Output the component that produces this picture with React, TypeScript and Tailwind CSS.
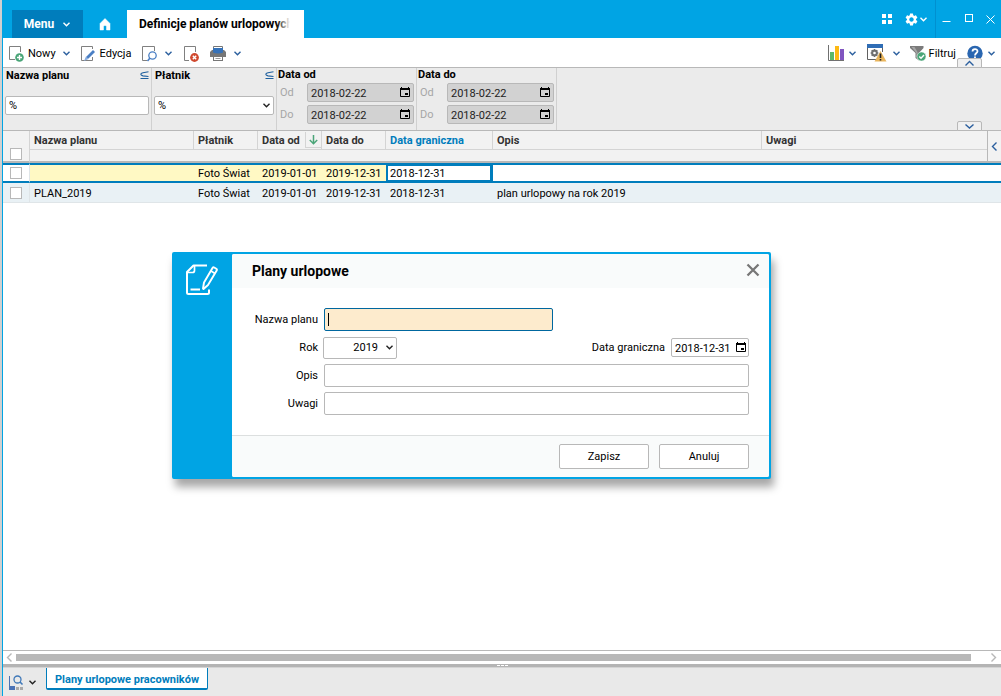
import type { ReactNode } from 'react'
import { MdSettings } from 'react-icons/md'

interface Plan {
  name: string
  payer: string
  from: string
  to: string
  deadline: string
  description: string
  notes: string
}

const plans: Plan[] = [
  { name: '', payer: 'Foto Świat', from: '2019-01-01', to: '2019-12-31', deadline: '2018-12-31', description: '', notes: '' },
  { name: 'PLAN_2019', payer: 'Foto Świat', from: '2019-01-01', to: '2019-12-31', deadline: '2018-12-31', description: 'plan urlopowy na rok 2019', notes: '' },
]

function Chevron({ className = 'text-[#2b5f9e]', dir = 'down' }: { className?: string; dir?: 'down' | 'up' | 'left' | 'right' }) {
  const points = {
    down: '1.5,2.8 4.5,5.8 7.5,2.8',
    up: '0.5,6.5 4.5,2.5 8.5,6.5',
    left: '6.5,0.5 2.5,4.5 6.5,8.5',
    right: '2.5,0.5 6.5,4.5 2.5,8.5',
  }
  return (
    <svg width="9" height="9" viewBox="0 0 9 9" className={`shrink-0 ${className}`} fill="none" stroke="currentColor" strokeWidth="1.4">
      <polyline points={points[dir]} />
    </svg>
  )
}

function HomeIcon() {
  return (
    <svg width="12" height="13" viewBox="0 0 12 13" fill="currentColor">
      <path d="M6 0.500L11 5.500V12H7.500V8.500Q7.500 7.500 6 7.500Q4.500 7.500 4.500 8.500V12H1V5.500Z" stroke="currentColor" strokeWidth="0.500" strokeLinejoin="round" />
    </svg>
  )
}

function NewIcon() {
  return (
    <svg width="16" height="17" viewBox="0 0 16 17">
      <path d="M11.500 7V1.500H0.500V14.500H6" fill="none" stroke="#808080" />
      <circle cx="10.500" cy="12.500" r="4.300" fill="#4aa578" />
      <path d="M10.500 10V15M8 12.500H13" stroke="#fff" strokeWidth="1.400" />
    </svg>
  )
}

function EditIcon() {
  return (
    <svg width="16" height="17" viewBox="0 0 16 17">
      <path d="M11.500 4V1.500H0.500V15.500H11.500V12" fill="none" stroke="#808080" />
      <path d="M4.500 14L5.500 11.500L12 5L14 7L7.500 13.500Z" fill="#4a7fc4" />
      <path d="M3 16L5 11.500L7.500 14Z" fill="#8aaee0" />
    </svg>
  )
}

function PreviewIcon() {
  return (
    <svg width="16" height="17" viewBox="0 0 16 17">
      <path d="M12.500 6V1.500H0.500V15.500H5" fill="none" stroke="#808080" />
      <circle cx="10.500" cy="10.500" r="3.700" fill="#fff" stroke="#4a7fc4" strokeWidth="1.300" />
      <path d="M8 13L5.500 16" stroke="#4a7fc4" strokeWidth="1.600" />
    </svg>
  )
}

function DeleteIcon() {
  return (
    <svg width="16" height="17" viewBox="0 0 16 17">
      <path d="M11.500 7V1.500H0.500V15.500H5" fill="none" stroke="#808080" />
      <circle cx="10.500" cy="12.500" r="4.400" fill="#d0492f" />
      <path d="M8.800 10.800L12.200 14.200M12.200 10.800L8.800 14.200" stroke="#fff" strokeWidth="1.400" />
    </svg>
  )
}

function PrinterIcon() {
  return (
    <svg width="16" height="17" viewBox="0 0 16 17">
      <path d="M3.500 5V1.500H12.500V5" fill="#fff" stroke="#777" />
      <path d="M2 5H14L16 7V12H0V7Z" fill="#777" />
      <path d="M3 3H13V7.500Q8 9.500 3 7.500Z" fill="#3672b9" />
      <rect x="3.500" y="11.500" width="9" height="4" fill="#fff" stroke="#777" />
      <path d="M5.500 13.500H10.500" stroke="#999" />
    </svg>
  )
}

function ChartIcon() {
  return (
    <svg width="16" height="17" viewBox="0 0 16 17">
      <path d="M0.500 0V15.500H16" fill="none" stroke="#707070" />
      <rect x="2" y="7" width="4" height="8" fill="#5cb86a" />
      <rect x="7" y="1" width="4" height="14" fill="#fdb913" />
      <rect x="12" y="4" width="4" height="11" fill="#8055c0" />
    </svg>
  )
}

function WarningWindowIcon() {
  return (
    <svg width="20" height="18" viewBox="0 0 20 18">
      <path d="M0.500 1V15.500H9M15.500 1V8" fill="none" stroke="#606060" />
      <rect width="16" height="4" fill="#2f6db5" />
      <circle cx="7.500" cy="9" r="2.500" fill="none" stroke="#707070" strokeWidth="1.800" />
      <path d="M7.500 5V13M3.500 9H11.500M4.700 6.200L10.300 11.800M10.300 6.200L4.700 11.800" stroke="#707070" strokeWidth="1.200" />
      <circle cx="7.500" cy="9" r="1.300" fill="#fff" />
      <path d="M13.500 7L19.500 17.500H7.500Z" fill="#e9b55c" />
      <path d="M13.500 9.500V14M13.500 15V16.500" stroke="#222" strokeWidth="1.600" />
    </svg>
  )
}

function FilterIcon() {
  return (
    <svg width="16" height="17" viewBox="0 0 16 17">
      <path d="M0 1H13.500V3L9 8V15.500L5.500 13V8L0 3Z" fill="#7b7b7b" />
      <path d="M1.500 2H4.500L7.500 7V13L6.500 12V8Z" fill="#a6a6a6" />
      <circle cx="11.500" cy="11.500" r="4.500" fill="#4aa578" stroke="#fff" strokeWidth="0.500" />
      <path d="M9.300 11.500L11 13.200L14 10" fill="none" stroke="#fff" strokeWidth="1.400" />
    </svg>
  )
}

function HelpIcon() {
  return (
    <svg width="16" height="17" viewBox="0 0 16 17">
      <circle cx="8" cy="8.500" r="7.700" fill="#2a66b0" />
      <path d="M5.500 6.500C5.500 3.300 10.500 3.300 10.500 6.300C10.500 8 8 8 8 10.500M8 11.500V13.300" fill="none" stroke="#fff" strokeWidth="1.800" />
    </svg>
  )
}

function SubsetIcon() {
  return (
    <svg width="9" height="9" viewBox="0 0 9 9" fill="none" stroke="#1d5f9e" strokeWidth="1.100">
      <path d="M8.500 0.800L3 1.800Q0.800 2.400 0.800 3.300Q0.800 4.300 3 4.900L8.500 5.500M0.500 7.500H8.500" />
    </svg>
  )
}

function CalendarIcon() {
  return (
    <svg width="10" height="11" viewBox="0 0 10 11" className="text-black">
      <path d="M0.500 2V9.500H9.500V2" fill="none" stroke="currentColor" />
      <path d="M0 1H10V3H0ZM1 0H2V1H1ZM8 0H9V1H8ZM5 6H8V8H5Z" fill="currentColor" />
    </svg>
  )
}

function DialogIcon() {
  return (
    <svg width="33" height="32" viewBox="0 0 33 32" fill="none" stroke="#fff" strokeWidth="2" strokeLinejoin="round">
      <path d="M22 1.500H8.500L2 8V28.500Q2 30 3.500 30H22.500Q24 30 24 28.500V25.500" />
      <path d="M9.500 2V6.500Q9.500 8.500 7.500 8.500H2.500" strokeWidth="1.700" />
      <path d="M18 24.500L19 18.500L27.500 4Q28.200 3 29.200 3.500L31.300 4.800Q32.300 5.500 31.700 6.500L23 21L18.500 25Z" strokeWidth="1.900" />
      <path d="M26 7L30 9.500" strokeWidth="1.500" />
      <path d="M5.500 25.500H15" />
    </svg>
  )
}

function ToolButton({ label, children }: { label: string; children: ReactNode }) {
  return (
    <button type="button" aria-label={label} className="flex h-5 items-center gap-[3px]">
      {children}
    </button>
  )
}

interface DateFieldProps {
  id: string
  value: string
  disabled?: boolean
}

function DateField({ id, value, disabled }: DateFieldProps) {
  return (
    <div
      className={`flex h-[19px] items-center rounded-[2px] border border-[#b8b8b8] pl-[3px] ${
        disabled ? 'w-[107px] bg-[#d2d2d2] pr-[3px] text-[#222]' : 'w-[78px] bg-white pr-[2px]'
      }`}
    >
      <input id={id} defaultValue={value} readOnly={disabled} className="min-w-0 flex-1 pt-px outline-none" />
      <button type="button" aria-label="Kalendarz" className="shrink-0">
        <CalendarIcon />
      </button>
    </div>
  )
}

function DateRange({ id, title }: { id: string; title: string }) {
  return (
    <fieldset className="w-[140px] border-r border-[#d0d0d0] pl-px">
      <legend className="float-left h-[15px] w-full leading-[13px] font-bold">{title}</legend>
      <div className="flex flex-col gap-[3px] pr-[2px]">
        {['Od', 'Do'].map((part) => (
          <div key={part} className="flex items-center justify-between pl-[2px]">
            <label htmlFor={`${id}-${part}`} className="text-[#a6a6a6]">{part}</label>
            <DateField id={`${id}-${part}`} value="2018-02-22" disabled />
          </div>
        ))}
      </div>
    </fieldset>
  )
}

function TitleBar() {
  return (
    <header className="flex h-[38px] items-end bg-[#00a4e4] pl-[9px] text-white">
      <button type="button" className="flex h-7 w-[71px] items-center justify-center gap-2 bg-[#007dbc] text-xs font-bold">
        Menu
        <Chevron className="text-white" />
      </button>
      <button type="button" aria-label="Start" className="flex h-7 w-11 items-center justify-center">
        <HomeIcon />
      </button>
      <div className="relative h-7 w-[177px] bg-white pl-3 text-xs leading-7 font-bold whitespace-nowrap text-black">
        Definicje planów urlopowych
        <div className="absolute top-0 right-0 flex h-7 w-7">
          <div className="w-[14px] bg-linear-to-r from-white/0 to-white" />
          <div className="flex-1 bg-white" />
        </div>
      </div>
      <div className="ml-auto flex h-full items-center">
        <button type="button" aria-label="Moduły">
          <svg width="10" height="10" viewBox="0 0 10 10" fill="currentColor">
            <path d="M0 0H4V4H0ZM6 0H10V4H6ZM0 6H4V10H0ZM6 6H10V10H6Z" />
          </svg>
        </button>
        <button type="button" aria-label="Ustawienia" className="ml-3 flex items-center">
          <MdSettings className="size-[15px]" />
          <Chevron className="text-white" />
        </button>
        <div className="ml-[7px] h-full w-px bg-[#0090d0]" />
        <button type="button" aria-label="Minimalizuj" className="ml-[6px]">
          <svg width="9" height="9" viewBox="0 0 9 9" stroke="currentColor"><path d="M0.500 6.500H8.500" /></svg>
        </button>
        <button type="button" aria-label="Maksymalizuj" className="ml-[14px]">
          <svg width="9" height="11" viewBox="0 0 9 11" stroke="currentColor" fill="none"><rect x="0.500" y="0.500" width="7" height="7" /></svg>
        </button>
        <button type="button" aria-label="Zamknij" className="mr-[6px] ml-3">
          <svg width="9" height="11" viewBox="0 0 9 11" stroke="currentColor"><path d="M0.500 1.500L8.500 9.500M8.500 1.500L0.500 9.500" /></svg>
        </button>
      </div>
    </header>
  )
}

function Toolbar() {
  return (
    <div className="flex h-[30px] items-center justify-between border-b border-[#b8b8b8] bg-white pt-px pr-[5px] pl-[6px]">
      <div className="flex items-center">
        <ToolButton label="Nowy"><NewIcon />Nowy</ToolButton>
        <Chevron className="ml-[6px] text-[#2b5f9e]" />
        <div className="ml-[10px]"><ToolButton label="Edycja"><EditIcon />Edycja</ToolButton></div>
        <div className="ml-[11px]"><ToolButton label="Podgląd"><PreviewIcon /></ToolButton></div>
        <Chevron className="ml-[6px] text-[#2b5f9e]" />
        <div className="ml-[11px]"><ToolButton label="Usuń"><DeleteIcon /></ToolButton></div>
        <div className="ml-[10px]"><ToolButton label="Drukuj"><PrinterIcon /></ToolButton></div>
        <Chevron className="ml-[7px] text-[#2b5f9e]" />
      </div>
      <div className="flex items-center">
        <ToolButton label="Wykres"><ChartIcon /></ToolButton>
        <Chevron className="ml-1 text-[#2b5f9e]" />
        <div className="ml-[10px]"><ToolButton label="Ostrzeżenia"><WarningWindowIcon /></ToolButton></div>
        <Chevron className="ml-[5px] text-[#2b5f9e]" />
        <div className="ml-[9px]"><ToolButton label="Filtruj"><FilterIcon />Filtruj</ToolButton></div>
        <div className="ml-[11px]"><ToolButton label="Pomoc"><HelpIcon /></ToolButton></div>
        <Chevron className="ml-1 text-[#2b5f9e]" />
      </div>
    </div>
  )
}

function FilterPanel() {
  return (
    <section className="relative flex h-[63px] border-b border-[#b8b8b8] bg-[#ebebeb]">
      <div className="w-[149px] border-r border-[#d0d0d0] px-[2px]">
        <div className="flex h-7 items-start justify-between pl-px">
          <label htmlFor="filter-name" className="leading-[15px] font-bold">Nazwa planu</label>
          <span className="pt-[3px]"><SubsetIcon /></span>
        </div>
        <input id="filter-name" defaultValue="%" className="block h-[19px] w-full rounded-[2px] border border-[#b8b8b8] bg-white px-[3px] outline-none" />
      </div>
      <div className="w-[125px] border-r border-[#d0d0d0] px-[2px]">
        <div className="flex h-7 items-start justify-between pl-px">
          <label htmlFor="filter-payer" className="leading-[15px] font-bold">Płatnik</label>
          <span className="pt-[3px]"><SubsetIcon /></span>
        </div>
        <div className="relative">
          <select id="filter-payer" className="block h-[19px] w-full appearance-none rounded-[2px] border border-[#b8b8b8] bg-white px-[3px] outline-none">
            <option>%</option>
          </select>
          <Chevron className="pointer-events-none absolute top-[5px] right-[3px] text-[#222]" />
        </div>
      </div>
      <DateRange id="filter-from" title="Data od" />
      <DateRange id="filter-to" title="Data do" />

      {/* Collapse handles */}
      <button type="button" aria-label="Zwiń" className="absolute -top-[10px] right-[19px] flex h-[10px] w-[25px] items-center justify-center rounded-t-[2px] border border-[#b8b8b8] bg-[#f0f0f0]">
        <Chevron dir="up" />
      </button>
      <button type="button" aria-label="Rozwiń" className="absolute right-[19px] -bottom-px flex h-[10px] w-[25px] items-center justify-center rounded-t-[2px] border border-[#b8b8b8] bg-[#f0f0f0]">
        <svg width="9" height="9" viewBox="0 0 9 9" fill="none" stroke="#2b5f9e" strokeWidth="1.400">
          <polyline points="0.5,2.5 4.5,6 8.5,2.5" />
        </svg>
      </button>
    </section>
  )
}

const headCell = 'h-[19px] border-r border-b border-[#d4d4d4] px-1 font-bold'

function PlansTable() {
  return (
    <table className="w-full table-fixed border-separate border-spacing-0 text-left whitespace-nowrap">
      <colgroup>
        <col className="w-[27px]" />
        <col className="w-[164px]" />
        <col className="w-16" />
        <col className="w-16" />
        <col className="w-16" />
        <col className="w-[107px]" />
        <col className="w-[269px]" />
        <col />
        <col className="w-[14px]" />
      </colgroup>
      <thead className="bg-[#f2f2f2] text-[#333]">
        <tr>
          <th rowSpan={2} className="border-r border-b-2 border-r-[#d4d4d4] border-b-[#b8b8b8] pb-px pl-[7px] align-bottom">
            <input type="checkbox" aria-label="Zaznacz wszystkie" className="block size-3 appearance-none border border-[#b8b8b8] bg-white" />
          </th>
          <th className={headCell}>Nazwa planu</th>
          <th className={headCell}>Płatnik</th>
          <th className={headCell}>
            <div className="-mr-1 flex items-center justify-between">
              Data od
              <span className="flex h-4 w-4 items-center justify-center border-b border-l border-[#d4d4d4]">
                <svg width="9" height="10" viewBox="0 0 9 10" fill="none" stroke="#4aa578" strokeWidth="1.500">
                  <path d="M4.500 0V8.500M0.800 5L4.500 8.700L8.200 5" />
                </svg>
              </span>
            </div>
          </th>
          <th className={headCell}>Data do</th>
          <th className={`${headCell} text-[#007dbc]`}>Data graniczna</th>
          <th className={headCell}>Opis</th>
          <th className="h-[19px] border-b border-[#d4d4d4] px-1 font-bold">Uwagi</th>
          <th rowSpan={2} className="border-b-2 border-l border-[#b8b8b8] pl-[2px]">
            <button type="button" aria-label="Pokaż panel" className="block">
              <Chevron dir="left" />
            </button>
          </th>
        </tr>
        <tr>
          <td colSpan={7} className="h-[13px] border-b-2 border-[#b8b8b8]" />
        </tr>
      </thead>
      <tbody>
        {plans.map((plan, i) => {
          const active = i === 0
          const cell = active
            ? 'h-5 border-y-2 border-[#007dbc] px-1 py-0'
            : 'h-5 border-b border-[#dfe5e8] bg-[#e9f1f5] px-1 pt-px pb-0'
          const tint = active ? 'bg-[#fff9c4]' : ''
          return (
            <tr key={i}>
              <td className={`${cell} border-r border-r-[#dfe5e8]`}>
                <input type="checkbox" aria-label={`Zaznacz ${plan.name}`} className="ml-[3px] block size-3 appearance-none border border-[#b8b8b8] bg-white" />
              </td>
              <td className={`${cell} ${tint}`}>{plan.name}</td>
              <td className={`${cell} ${tint}`}>{plan.payer}</td>
              <td className={`${cell} ${tint}`}>{plan.from}</td>
              <td className={`${cell} ${tint}`}>{plan.to}</td>
              <td className={`${cell} ${active ? 'shadow-[inset_2px_0_#007dbc,inset_-3px_0_#007dbc,inset_0_1px_#007dbc,inset_0_-1px_#007dbc]' : ''}`}>{plan.deadline}</td>
              <td className={cell}>{plan.description}</td>
              <td className={cell}>{plan.notes}</td>
              <td className={cell} />
            </tr>
          )
        })}
      </tbody>
    </table>
  )
}

const fieldLabel = 'w-[86px] pr-[6px] text-right'
const textField = 'h-[23px] rounded-[2px] border border-[#b8b8b8] bg-white px-1 outline-none'

function PlanDialog() {
  return (
    <div
      role="dialog"
      aria-labelledby="dialog-title"
      className="absolute top-[252px] left-[172px] flex w-[599px] rounded-[2px] border-2 border-[#00a4e4] bg-[#00a4e4] shadow-[3px_8px_8px_rgba(0,0,0,0.35)]"
    >
      <div className="w-[58px] shrink-0 pt-[10px] pl-[11px]">
        <DialogIcon />
      </div>
      <form className="min-w-0 flex-1 rounded-[2px] bg-white">
        <div className="flex h-[34px] items-center justify-between rounded-t-[2px] bg-[#f9fbfb] pr-[9px] pl-5">
          <h2 id="dialog-title" className="text-sm font-bold">Plany urlopowe</h2>
          <button type="button" aria-label="Zamknij okno" className="pb-[2px]">
            <svg width="14" height="14" viewBox="0 0 14 14" stroke="#777" strokeWidth="2.300">
              <path d="M1.500 1.500L12.500 12.500M12.500 1.500L1.500 12.500" />
            </svg>
          </button>
        </div>
        <div className="flex flex-col gap-[5px] pt-5 pr-5 pb-5 pl-[6px]">
          <div className="flex items-center">
            <label htmlFor="plan-name" className={fieldLabel}>Nazwa planu</label>
            <div className="relative">
              <input id="plan-name" autoFocus className="block h-[23px] w-[229px] rounded-[2px] border border-[#00679f] bg-[#fdebcd] px-[3px] caret-transparent outline-none" />
              <span className="pointer-events-none absolute top-[5px] left-1 h-[13px] w-px bg-black" />
            </div>
          </div>
          <div className="flex h-[23px] items-center">
            <label htmlFor="plan-year" className={fieldLabel}>Rok</label>
            <div className="relative -ml-px">
              <select id="plan-year" className="block h-[22px] w-[74px] appearance-none rounded-[2px] border border-[#b8b8b8] bg-white pr-[18px] pb-px text-right outline-none">
                <option>2019</option>
              </select>
              <Chevron className="pointer-events-none absolute top-[6px] right-[3px] text-[#222]" />
            </div>
            <label htmlFor="plan-deadline" className="ml-auto pr-[6px]">Data graniczna</label>
            <DateField id="plan-deadline" value="2018-12-31" />
          </div>
          <div className="flex items-center">
            <label htmlFor="plan-description" className={fieldLabel}>Opis</label>
            <input id="plan-description" className={`${textField} min-w-0 flex-1`} />
          </div>
          <div className="flex items-center">
            <label htmlFor="plan-notes" className={fieldLabel}>Uwagi</label>
            <input id="plan-notes" className={`${textField} min-w-0 flex-1`} />
          </div>
        </div>
        <div className="flex justify-end gap-[10px] rounded-b-[2px] border-t border-[#dcdfdf] bg-[#f9fbfb] py-2 pr-5">
          <button type="button" className="h-[25px] w-[90px] rounded-[2px] border border-[#b8b8b8] bg-white">Zapisz</button>
          <button type="button" className="h-[25px] w-[90px] rounded-[2px] border border-[#b8b8b8] bg-white">Anuluj</button>
        </div>
      </form>
    </div>
  )
}

function Footer() {
  return (
    <footer>
      {/* Horizontal scrollbar */}
      <div className="flex h-[14px] items-center gap-[2px] border-t border-[#b8b8b8] bg-white pl-[2px]">
        <Chevron dir="left" className="text-[#b8b8b8]" />
        <div className="h-[7px] flex-1 bg-[#b8b8b8]" />
        <Chevron dir="right" className="mr-[3px] ml-4 text-[#b8b8b8]" />
      </div>
      {/* Splitter */}
      <div className="flex h-1 items-start justify-center gap-px border-b border-[#d4d4d4] bg-[#b4b4b4] pt-px">
        <span className="h-px w-[3px] bg-white" />
        <span className="h-px w-[3px] bg-white" />
        <span className="h-px w-[3px] bg-white" />
      </div>
      <div className="flex h-7 items-start bg-[#e9e9e9] pl-[6px]">
        <button type="button" aria-label="Widoki" className="mt-[7px] flex items-center gap-1">
          <svg width="15" height="15" viewBox="0 0 15 15">
            <path d="M0.500 1V15" stroke="#4a72b5" />
            <rect y="11" width="6" height="4" fill="#4a72b5" />
            <rect x="7" y="12" width="3" height="3" fill="#aaa" />
            <rect x="11" y="12" width="3" height="3" fill="#aaa" />
            <circle cx="8.500" cy="4.500" r="3.500" fill="none" stroke="#3f78b8" strokeWidth="1.300" />
            <path d="M11 7L13.500 9.500" stroke="#3f78b8" strokeWidth="1.600" />
          </svg>
          <Chevron className="text-[#222]" />
        </button>
        <button type="button" className="ml-[9px] h-[22px] w-[162px] rounded-b-[2px] border border-t-0 border-b-2 border-[#007dbc] bg-white pt-[2px] font-bold text-[#007dbc]">
          Plany urlopowe pracowników
        </button>
      </div>
    </footer>
  )
}

export default function App() {
  return (
    <div className="relative min-h-screen bg-[#d0d0d0] pl-[2px] font-[Roboto,sans-serif] text-[11px] leading-[15px] text-black">
      <div className="flex min-h-screen flex-col border-l border-[#00a4e4] bg-white">
        <TitleBar />
        <Toolbar />
        <FilterPanel />
        <main className="flex-1">
          <PlansTable />
        </main>
        <Footer />
      </div>
      <PlanDialog />
    </div>
  )
}
